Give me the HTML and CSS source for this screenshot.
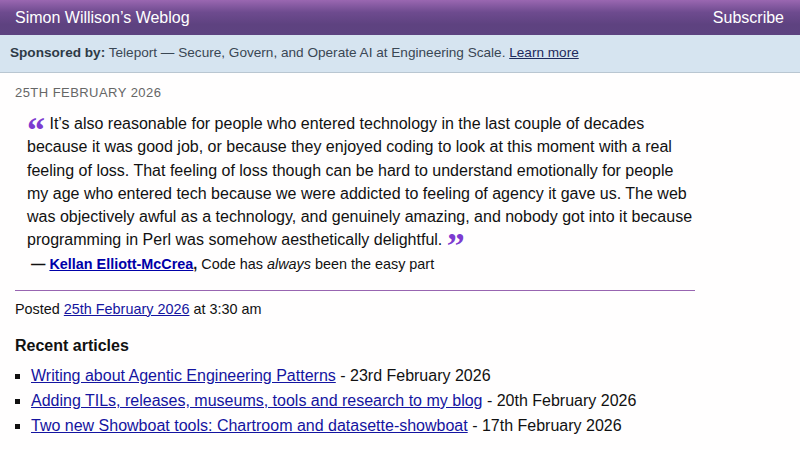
FILE: index.html
```html
<!DOCTYPE html>
<html>
<head>
<meta charset="utf-8">
<link rel="stylesheet" href="styles.css">
</head>
<body>
<header class="hd">
  <a class="hd-title" href="#">Simon Willison’s Weblog</a>
  <a class="hd-sub" href="#">Subscribe</a>
</header>
<div class="sponsor">
  <strong>Sponsored by:</strong> Teleport — Secure, Govern, and Operate AI at Engineering Scale. <a href="#">Learn more</a>
</div>
<main class="main">
  <div class="date">25th February 2026</div>
  <blockquote class="quote">
    <p><span class="qm">“</span> It’s also reasonable for people who entered technology in the last couple of decades because it was good job, or because they enjoyed coding to look at this moment with a real feeling of loss. That feeling of loss though can be hard to understand emotionally for people my age who entered tech because we were addicted to feeling of agency it gave us. The web was objectively awful as a technology, and genuinely amazing, and nobody got into it because programming in Perl was somehow aesthetically delightful. <span class="qm">”</span></p>
  </blockquote>
  <p class="cite"><strong>— <a href="#">Kellan Elliott-McCrea</a>,</strong> Code has <em>always</em> been the easy part</p>
  <div class="posted">Posted <a href="#">25th February 2026</a> at 3:30 am</div>
  <h3 class="recent-h">Recent articles</h3>
  <ul class="recent">
    <li><a href="#">Writing about Agentic Engineering Patterns</a> - 23rd February 2026</li>
    <li><a href="#">Adding TILs, releases, museums, tools and research to my blog</a> - 20th February 2026</li>
    <li><a href="#">Two new Showboat tools: Chartroom and datasette-showboat</a> - 17th February 2026</li>
  </ul>
</main>
</body>
</html>
```
FILE: styles.css
```css
html, body {
  margin: 0;
  padding: 0;
  background: #fffefe;
  font-family: "Liberation Sans", Arial, sans-serif;
  color: #111;
}
.hd {
  height: 35px;
  box-sizing: border-box;
  display: flex;
  align-items: center;
  justify-content: space-between;
  padding: 0 16px 0 15px;
  background: linear-gradient(to bottom, #9a67b1 0%, #6e4b8f 35%, #5e4280 70%, #5d4380 100%);
}
.hd a {
  color: #fff;
  text-decoration: none;
  font-size: 16px;
}
.sponsor {
  height: 38px;
  box-sizing: border-box;
  background: #d6e4f0;
  border-bottom: 1px solid #b9c6d1;
  padding: 10px 10px 0;
  font-size: 13.6px;
  color: #3a4754;
}
.sponsor strong {
  color: #2e3a46;
}
.sponsor a {
  color: #1e2a5c;
}
.main {
  width: 680px;
  padding: 0 15px;
}
.date {
  margin-top: 12px;
  font-size: 13px;
  text-transform: uppercase;
  letter-spacing: 0.45px;
  color: #666;
}
.quote {
  margin: 12px 0 0 12px;
  font-size: 16px;
  line-height: 23.3px;
  color: #111;
}
.quote p {
  margin: 0;
}
.qm {
  font-family: "Liberation Serif", "Times New Roman", serif;
  font-weight: bold;
  font-size: 36px;
  color: #7d3bd0;
  line-height: 0;
  vertical-align: -13px;
}
.cite {
  margin: 4px 0 0 16px;
  font-size: 14.4px;
}
.cite strong a {
  color: #0000a8;
}
.posted {
  margin-top: 18px;
  padding-top: 10px;
  border-top: 1px solid #9865b1;
  font-size: 14.4px;
}
.posted a {
  color: #1414a0;
}
.recent-h {
  margin: 20px 0 0;
  font-size: 16px;
}
.recent {
  margin: 8px 0 0;
  padding-left: 16px;
  list-style: square;
  font-size: 16px;
  line-height: 25px;
}
.recent a {
  color: #1414a0;
}
```
